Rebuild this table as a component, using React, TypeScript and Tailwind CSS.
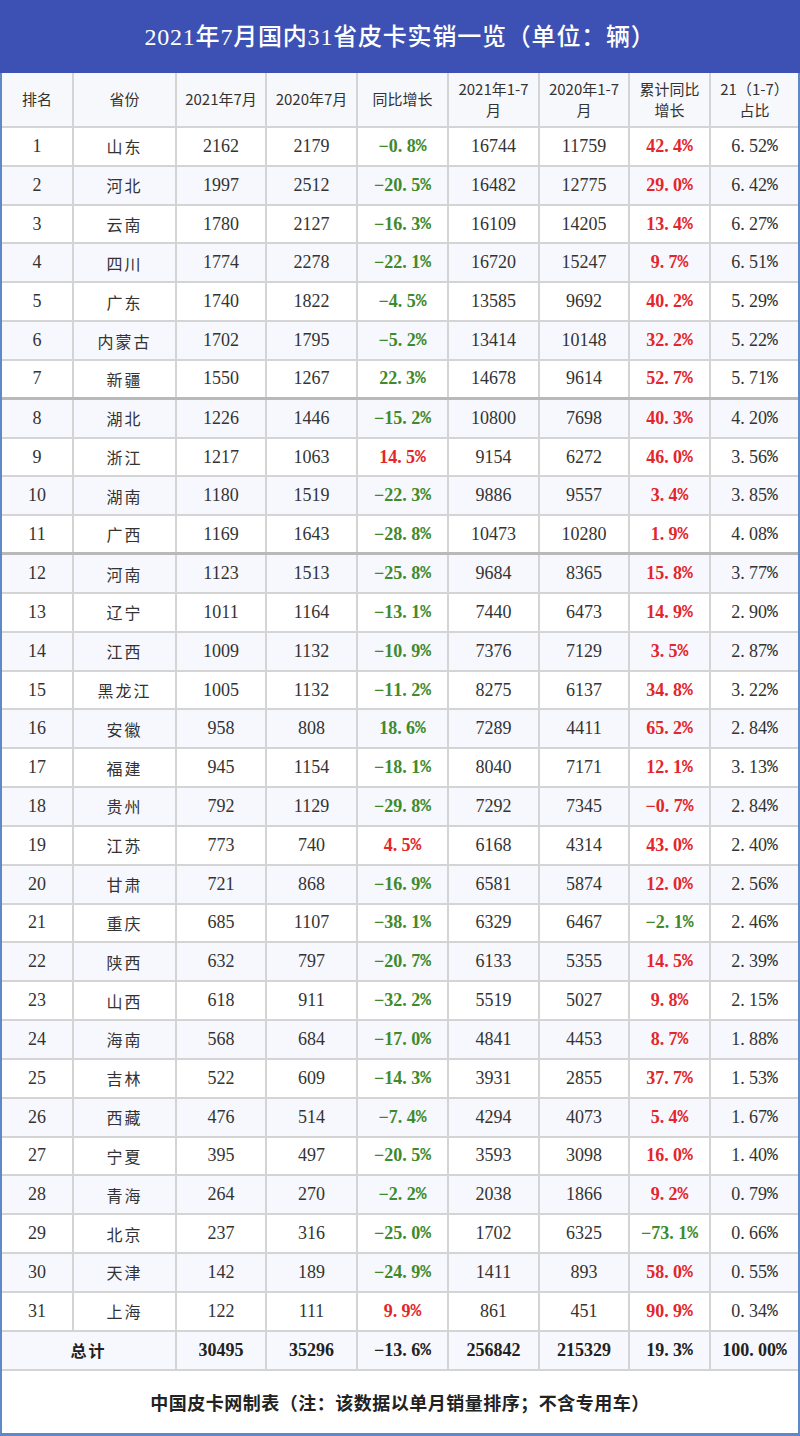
import React from "react";

type Row = [number, string, number, number, string, number, number, string, string];

const rows: Row[] = [
    [1, "山东", 2162, 2179, "-0.8%", 16744, 11759, "42.4%", "6.52%"],
    [2, "河北", 1997, 2512, "-20.5%", 16482, 12775, "29.0%", "6.42%"],
    [3, "云南", 1780, 2127, "-16.3%", 16109, 14205, "13.4%", "6.27%"],
    [4, "四川", 1774, 2278, "-22.1%", 16720, 15247, "9.7%", "6.51%"],
    [5, "广东", 1740, 1822, "-4.5%", 13585, 9692, "40.2%", "5.29%"],
    [6, "内蒙古", 1702, 1795, "-5.2%", 13414, 10148, "32.2%", "5.22%"],
    [7, "新疆", 1550, 1267, "22.3%", 14678, 9614, "52.7%", "5.71%"],
    [8, "湖北", 1226, 1446, "-15.2%", 10800, 7698, "40.3%", "4.20%"],
    [9, "浙江", 1217, 1063, "14.5%", 9154, 6272, "46.0%", "3.56%"],
    [10, "湖南", 1180, 1519, "-22.3%", 9886, 9557, "3.4%", "3.85%"],
    [11, "广西", 1169, 1643, "-28.8%", 10473, 10280, "1.9%", "4.08%"],
    [12, "河南", 1123, 1513, "-25.8%", 9684, 8365, "15.8%", "3.77%"],
    [13, "辽宁", 1011, 1164, "-13.1%", 7440, 6473, "14.9%", "2.90%"],
    [14, "江西", 1009, 1132, "-10.9%", 7376, 7129, "3.5%", "2.87%"],
    [15, "黑龙江", 1005, 1132, "-11.2%", 8275, 6137, "34.8%", "3.22%"],
    [16, "安徽", 958, 808, "18.6%", 7289, 4411, "65.2%", "2.84%"],
    [17, "福建", 945, 1154, "-18.1%", 8040, 7171, "12.1%", "3.13%"],
    [18, "贵州", 792, 1129, "-29.8%", 7292, 7345, "-0.7%", "2.84%"],
    [19, "江苏", 773, 740, "4.5%", 6168, 4314, "43.0%", "2.40%"],
    [20, "甘肃", 721, 868, "-16.9%", 6581, 5874, "12.0%", "2.56%"],
    [21, "重庆", 685, 1107, "-38.1%", 6329, 6467, "-2.1%", "2.46%"],
    [22, "陕西", 632, 797, "-20.7%", 6133, 5355, "14.5%", "2.39%"],
    [23, "山西", 618, 911, "-32.2%", 5519, 5027, "9.8%", "2.15%"],
    [24, "海南", 568, 684, "-17.0%", 4841, 4453, "8.7%", "1.88%"],
    [25, "吉林", 522, 609, "-14.3%", 3931, 2855, "37.7%", "1.53%"],
    [26, "西藏", 476, 514, "-7.4%", 4294, 4073, "5.4%", "1.67%"],
    [27, "宁夏", 395, 497, "-20.5%", 3593, 3098, "16.0%", "1.40%"],
    [28, "青海", 264, 270, "-2.2%", 2038, 1866, "9.2%", "0.79%"],
    [29, "北京", 237, 316, "-25.0%", 1702, 6325, "-73.1%", "0.66%"],
    [30, "天津", 142, 189, "-24.9%", 1411, 893, "58.0%", "0.55%"],
    [31, "上海", 122, 111, "9.9%", 861, 451, "90.9%", "0.34%"],
];

// which cells break the usual colour (同比 is green, 累计 is red)
const yoyRed = [9, 19, 31];
const cumGreen = [21, 29];

const GREEN = "text-[#3f8a2c]";
const RED = "text-[#e3262b]";

const Num = ({ v }: { v: string | number }) => (
    <>
        {String(v)
            .split("")
            .map((c, i) => {
                if (c === ".") return <span key={i} className="mr-[0.24em]">.</span>;
                if (c === "%")
                    return (
                        <span key={i} className="font-['Liberation_Mono',monospace]">
                            %
                        </span>
                    );
                if (c === "-") return <span key={i}>−</span>;
                return <span key={i}>{c}</span>;
            })}
    </>
);

const cols = "grid grid-cols-[72px_103px_90px_91px_91px_91px_90px_81px_87px]";
const cell = "flex items-center justify-center border-r-2 border-[#d4d4d4] text-center";
const lastCell = "flex items-center justify-center text-center";

const headers = [
    "排名",
    "省份",
    "2021年7月",
    "2020年7月",
    "同比增长",
    "2021年1-7\n月",
    "2020年1-7\n月",
    "累计同比\n增长",
    "21（1-7）\n占比",
];

export default function App() {
    return (
        <div className="w-[800px] h-[1436px] bg-white flex flex-col font-['Liberation_Serif','Noto_Sans_CJK_SC',serif] text-[#333]">
            <div className="h-[73px] bg-[#3d50b4] flex items-center justify-center text-white text-[24px] font-medium tracking-[0.8px]">
                2021年7月国内31省皮卡实销一览（单位：辆）
            </div>
            <div className="flex-1 flex flex-col border-x-2 border-b-[3px] border-[#6088c4]">
                <div
                    className={`${cols} h-[55px] bg-[#f7f8fc] border-b-2 border-[#d4d4d4] font-['Noto_Sans_CJK_SC',sans-serif] text-[15px] leading-[1.35] text-[#333]`}
                >
                    {headers.map((h, i) => (
                        <div key={i} className={`${i < 8 ? cell : lastCell} whitespace-pre-line`}>
                            {h}
                        </div>
                    ))}
                </div>

                {rows.map((r) => {
                    const [rank, name, a, b, yoy, c, d, cum, share] = r;
                    const thick = rank === 7 || rank === 11;
                    return (
                        <div
                            key={rank}
                            className={`${cols} h-[38.84px] ${rank % 2 === 0 ? "bg-[#f7f8fd]" : "bg-white"} ${
                                thick ? "border-b-[3px] border-[#b9b9b9]" : "border-b-2 border-[#d4d4d4]"
                            } text-[18px]`}
                        >
                            <div className={cell}>{rank}</div>
                            <div className={`${cell} font-['Noto_Sans_CJK_SC',sans-serif] text-[16px] tracking-[2px]`}>
                                {name}
                            </div>
                            <div className={cell}>{a}</div>
                            <div className={cell}>{b}</div>
                            <div className={`${cell} font-bold ${yoyRed.includes(rank) ? RED : GREEN}`}>
                                <Num v={yoy} />
                            </div>
                            <div className={cell}>{c}</div>
                            <div className={cell}>{d}</div>
                            <div className={`${cell} font-bold ${cumGreen.includes(rank) ? GREEN : RED}`}>
                                <Num v={cum} />
                            </div>
                            <div className={lastCell}>
                                <Num v={share} />
                            </div>
                        </div>
                    );
                })}

                <div
                    className={`grid grid-cols-[175px_90px_91px_91px_91px_90px_81px_87px] h-[39px] bg-[#f7f8fd] border-b-2 border-[#d4d4d4] text-[18px] font-bold text-[#222]`}
                >
                    <div className={`${cell} font-['Noto_Sans_CJK_SC',sans-serif] text-[16px] tracking-[2px]`}>总计</div>
                    <div className={cell}>30495</div>
                    <div className={cell}>35296</div>
                    <div className={cell}>
                        <Num v="-13.6%" />
                    </div>
                    <div className={cell}>256842</div>
                    <div className={cell}>215329</div>
                    <div className={cell}>
                        <Num v="19.3%" />
                    </div>
                    <div className={lastCell}>
                        <Num v="100.00%" />
                    </div>
                </div>

                <div className="flex-1 flex items-center justify-center font-['Noto_Sans_CJK_SC',sans-serif] text-[18px] tracking-[0.5px] font-bold text-[#222] pt-[1px]">
                    中国皮卡网制表（注：该数据以单月销量排序；不含专用车）
                </div>
            </div>
        </div>
    );
}
